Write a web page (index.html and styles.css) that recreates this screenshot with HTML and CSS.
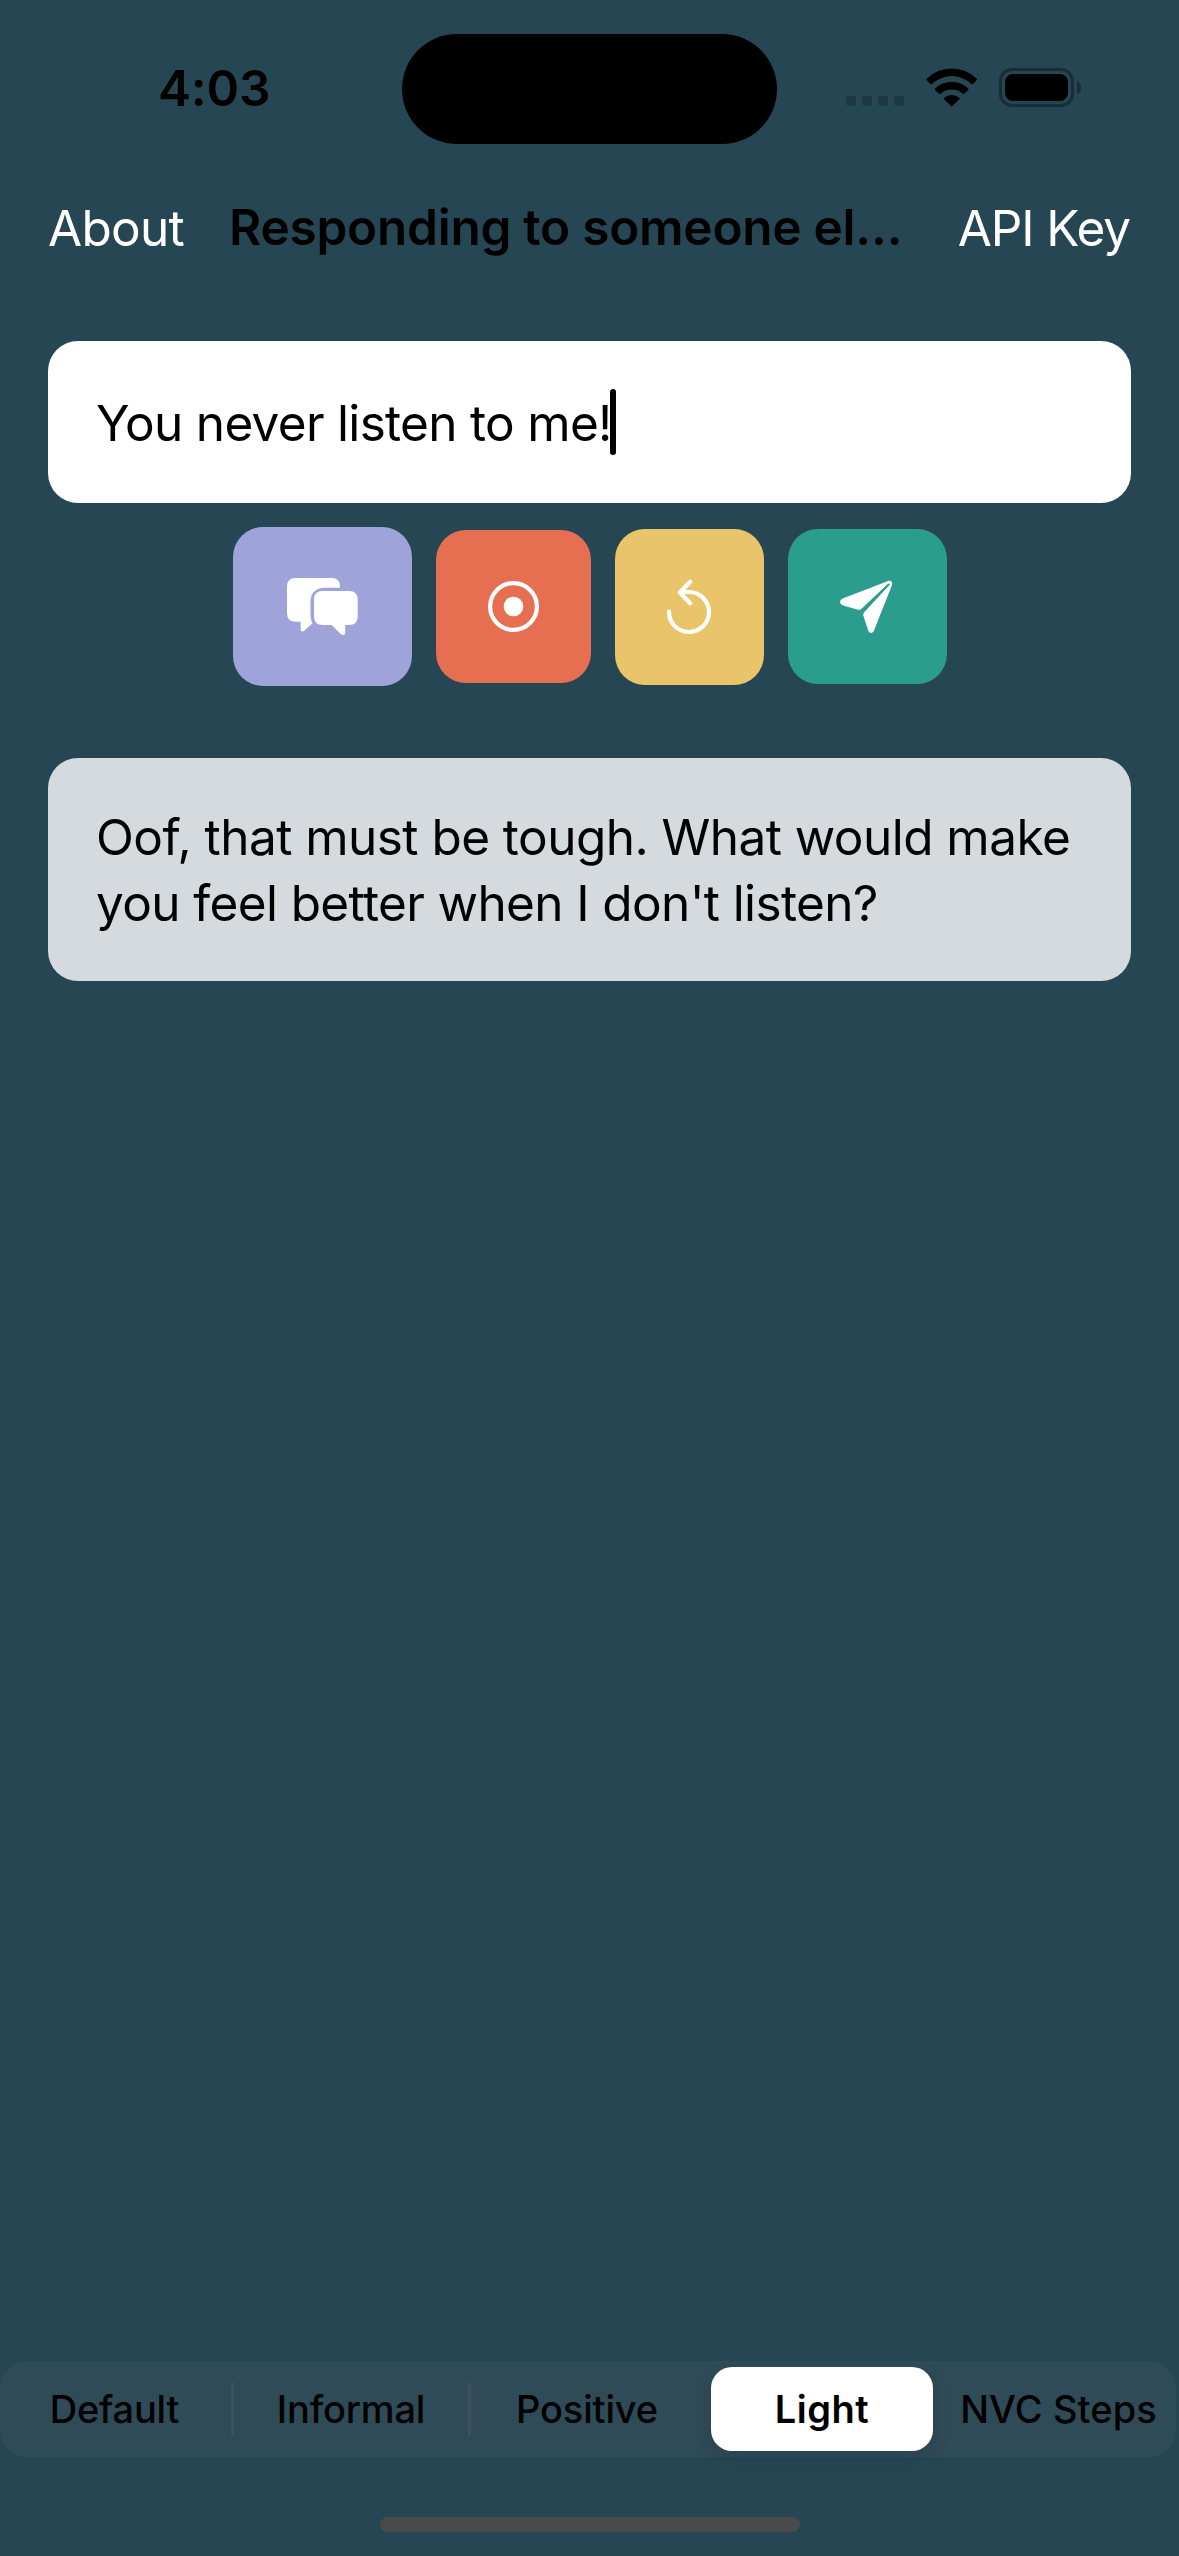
FILE: index.html
```
<!DOCTYPE html>
<html lang="en">
<head>
<meta charset="utf-8">
<title>Responding to someone else</title>
<link rel="stylesheet" href="styles.css">
</head>
<body>
<div class="screen">
  <header class="status">
    <div class="time">4:03</div>
    <div class="island"></div>
    <div class="indicators">
      <svg width="58" height="39" viewBox="0 0 58 39" class="cellular">
        <rect x="0" y="28" width="10" height="10" rx="3"/>
        <rect x="16" y="28" width="10" height="10" rx="3"/>
        <rect x="32" y="28" width="10" height="10" rx="3"/>
        <rect x="48" y="28" width="10" height="10" rx="3"/>
      </svg>
      <svg width="53" height="39" viewBox="0 0 53 39">
        <path d="M1.9 12.2Q1 11.4 1.9 10.5A35.5 35.5 0 0 1 51.5 10.5Q52.4 11.4 51.5 12.2L48 16Q47.4 16.7 46.6 16A29 29 0 0 0 6.8 16Q6 16.7 5.4 16Z"/>
        <path d="M10.2 22Q9.4 21.2 10.2 20.4A23.5 23.5 0 0 1 43.2 20.4Q44 21.2 43.2 22L39.4 25.7Q38.7 26.3 38 25.7A17 17 0 0 0 15.4 25.7Q14.7 26.3 14 25.7Z"/>
        <path d="M19 31.3Q18.3 30.5 19.1 29.8A11.5 11.5 0 0 1 34.3 29.8Q35.1 30.5 34.4 31.3L27.3 38Q26.7 38.5 26.1 38Z"/>
      </svg>
      <svg width="83" height="39" viewBox="0 0 83 39">
        <rect x="1.5" y="1.5" width="72" height="36" rx="11.5" class="battery-shell"/>
        <rect x="6" y="6" width="63" height="27" rx="8"/>
        <path d="M78 13C83.4 15.2 83.4 23.8 78 26Z" class="battery-cap"/>
      </svg>
    </div>
  </header>

  <nav class="nav">
    <a class="link about">About</a>
    <h1 class="title">Responding to someone el…</h1>
    <a class="link key">API Key</a>
  </nav>

  <main class="content">
    <div class="input"><span class="input-text">You never listen to me!</span><span class="caret"></span></div>

    <div class="actions">
      <button class="action chat" aria-label="Chat">
        <svg width="73" height="60" viewBox="0 0 73 60">
          <path d="M9.5 1H45.5Q54 1 54 9.5V10.7H38.5C30 10.7 24.5 16 24.5 24.5V38Q24.5 43 26.6 46.3L18.5 53.5Q15 56 14.7 52.5V44.7H9.5Q1 44.7 1 36V9.5Q1 1 9.5 1Z"/>
          <path d="M36.5 14H63.2Q71.7 14 71.7 22.5V39.5Q71.7 48 63.2 48H59.2V55.5Q59 59.5 55 57.3L45.5 48H36.5Q28 48 28 39.5V22.5Q28 14 36.5 14Z"/>
        </svg>
      </button>
      <button class="action record" aria-label="Record">
        <svg width="53" height="53" viewBox="0 0 53 53">
          <circle cx="26.5" cy="26.5" r="23.4" class="line"/>
          <circle cx="26.5" cy="26.5" r="9.8"/>
        </svg>
      </button>
      <button class="action reset" aria-label="Reset">
        <svg width="53" height="60" viewBox="0 0 53 60">
          <path d="M6 34.5A20 20 0 1 0 26 15H17.5M27.2 4.8L16.8 15.5L27.2 26.3" class="line"/>
        </svg>
      </button>
      <button class="action send" aria-label="Send">
        <svg width="58" height="58" viewBox="1 0 58 58">
          <path d="M5.3 20.3L49.5 3.2C53 2 55 4 53.8 7.5L36 52.5C34.8 55.8 31.3 55.7 30.2 52.5L25.3 37.5Q24.9 35.7 26.2 34.3L51.7 6.8Q52 6 51.2 5.7Q50.7 5.3 50 5.8L23.3 30.9Q21.8 32.2 20 31.7L5.2 27.4C1 26 1 22 5.3 20.3Z"/>
        </svg>
      </button>
    </div>

    <p class="reply"><span class="line-one">Oof, that must be tough. What would make</span> <span class="line-two">you feel better when I don't listen?</span></p>
  </main>

  <footer class="footer">
    <div class="segments">
      <span class="segment default">Default</span>
      <span class="rule"></span>
      <span class="segment informal">Informal</span>
      <span class="rule"></span>
      <span class="segment positive">Positive</span>
      <span class="segment selected">Light</span>
      <span class="segment steps">NVC Steps</span>
    </div>
    <div class="home"></div>
  </footer>
</div>
</body>
</html>
```
FILE: styles.css
```
* {
  box-sizing: border-box;
}

body {
  margin: 0;
  background: #264653;
  color: #000;
  font-family: Inter, "Liberation Sans", sans-serif;
  font-size: 49.5px;
  line-height: 60px;
}

svg {
  display: block;
}

.screen {
  display: flex;
  flex-direction: column;
  width: 1179px;
  height: 2556px;
  overflow: hidden;
  white-space: nowrap;
}

.status {
  display: grid;
  grid-template-columns: 402px 375px 1fr;
  height: 175px;
}

.time {
  padding: 58px 0 0 158px;
  font-weight: 600;
  letter-spacing: -0.1px;
}

.island {
  height: 110px;
  margin-top: 34px;
  border-radius: 55px;
  background: #000;
}

.indicators {
  display: flex;
  gap: 21px;
  padding: 68px 0 0 69px;
}

.cellular {
  fill: #1e3842;
}

.battery-shell {
  fill: none;
  stroke: #182d35;
  stroke-width: 3;
}

.battery-cap {
  fill: #182d35;
}

.nav {
  display: flex;
  height: 166px;
  padding: 22px 49px 0 48px;
}

.link {
  padding-top: 1px;
  color: #fff;
}

.about {
  letter-spacing: -0.7px;
}

.title {
  margin: 0 0 0 45px;
  font-size: inherit;
  font-weight: 600;
  letter-spacing: -0.25px;
}

.key {
  margin-left: auto;
  letter-spacing: -1.1px;
}

.content {
  flex: 1;
  padding: 0 48px;
}

.input {
  display: flex;
  height: 162px;
  padding: 48px 48px 0;
  border-radius: 30px;
  background: #fff;
}

.input-text {
  padding-top: 4px;
  letter-spacing: -0.7px;
}

.caret {
  width: 6px;
  height: 66px;
  margin-left: -1.6px;
  border-radius: 3px;
  background: #000;
}

.actions {
  display: flex;
  justify-content: center;
  align-items: center;
  gap: 24px;
  height: 159px;
  margin-top: 24px;
  padding-left: 1px;
}

.action {
  display: flex;
  align-items: center;
  justify-content: center;
  padding: 0;
  border: 0;
  border-radius: 30px;
  fill: #fff;
}

.line {
  fill: none;
  stroke: #fff;
  stroke-width: 4.2px;
  stroke-linecap: round;
  stroke-linejoin: round;
}

.chat {
  width: 179px;
  height: 159px;
  background: #9ea3da;
}

.record {
  width: 155px;
  height: 153px;
  background: #e76f51;
}

.reset {
  width: 149px;
  height: 156px;
  background: #e9c46a;
}

.send {
  width: 159px;
  height: 155px;
  background: #2a9d8f;
}

.reply {
  display: flex;
  flex-direction: column;
  height: 223px;
  margin: 72px 0 0;
  padding: 46px 48px 0;
  border-radius: 30px;
  background: #d4dadd;
  line-height: 66px;
}

.line-one {
  letter-spacing: -0.54px;
}

.line-two {
  letter-spacing: -0.62px;
}

.footer {
  height: 195px;
  font-size: 38px;
  font-weight: 500;
  line-height: 46px;
}

.segments {
  display: flex;
  align-items: center;
  width: 1176px;
  height: 96px;
  border-radius: 27px;
  background: #2f4b57;
}

.segment {
  width: 234px;
  text-align: center;
}

.default {
  width: 231px;
  padding-right: 2px;
  letter-spacing: -0.25px;
}

.informal,
.positive {
  letter-spacing: -0.13px;
}

.positive {
  padding-right: 2px;
}

.rule {
  width: 3px;
  height: 54px;
  border-radius: 1.5px;
  background: #3b5360;
}

.selected {
  width: 222px;
  margin: 0 6px;
  padding: 19px 0;
  border-radius: 21px;
  background: #fff;
  box-shadow: 0 6px 18px rgba(0, 0, 0, 0.1);
  font-weight: 600;
  letter-spacing: 0.5px;
}

.steps {
  flex: 1;
  padding-left: 2px;
  letter-spacing: 0.1px;
}

.home {
  width: 420px;
  height: 15px;
  margin: 60px 0 0 380px;
  border-radius: 7.5px;
  background: #4a4a4a;
}
```
